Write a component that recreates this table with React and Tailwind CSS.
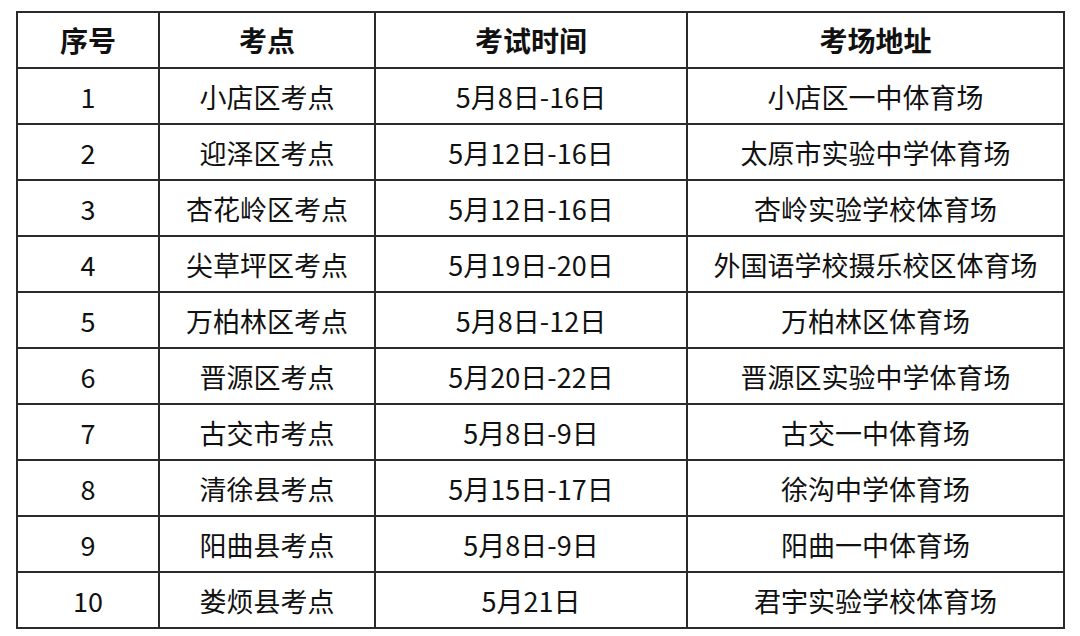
import React from 'react';

const rows = [
    ['1', '小店区考点', '5月8日-16日', '小店区一中体育场'],
    ['2', '迎泽区考点', '5月12日-16日', '太原市实验中学体育场'],
    ['3', '杏花岭区考点', '5月12日-16日', '杏岭实验学校体育场'],
    ['4', '尖草坪区考点', '5月19日-20日', '外国语学校摄乐校区体育场'],
    ['5', '万柏林区考点', '5月8日-12日', '万柏林区体育场'],
    ['6', '晋源区考点', '5月20日-22日', '晋源区实验中学体育场'],
    ['7', '古交市考点', '5月8日-9日', '古交一中体育场'],
    ['8', '清徐县考点', '5月15日-17日', '徐沟中学体育场'],
    ['9', '阳曲县考点', '5月8日-9日', '阳曲一中体育场'],
    ['10', '娄烦县考点', '5月21日', '君宇实验学校体育场'],
];

const App = () => {
    return (
        <div className="h-[636px] w-[1080px] bg-white pl-[16px] pt-[11px] font-['Noto_Sans_CJK_SC',sans-serif] text-[#111]">
            <table className="w-[1047px] table-fixed border-collapse text-center text-[27px]">
                <colgroup>
                    <col className="w-[142px]" />
                    <col className="w-[216px]" />
                    <col className="w-[312px]" />
                    <col className="w-[377px]" />
                </colgroup>
                <thead>
                    <tr className="h-[56px]">
                        {['序号', '考点', '考试时间', '考场地址'].map((h) => (
                            <th key={h} className="border-2 border-[#2a2a2a] p-0 text-[28px] font-bold leading-none">
                                {h}
                            </th>
                        ))}
                    </tr>
                </thead>
                <tbody>
                    {rows.map((r) => (
                        <tr key={r[0]} className="h-[56px]">
                            {r.map((c, i) => (
                                <td key={i} className="border-2 border-[#2a2a2a] p-0 leading-none">
                                    {c}
                                </td>
                            ))}
                        </tr>
                    ))}
                </tbody>
            </table>
        </div>
    );
};

export default App;
